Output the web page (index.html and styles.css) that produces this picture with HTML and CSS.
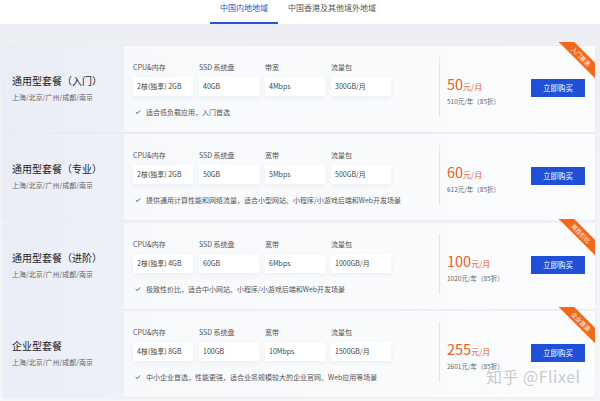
FILE: index.html
```html
<!DOCTYPE html>
<html lang="zh">
<head>
<meta charset="utf-8">
<link rel="stylesheet" href="styles.css">
</head>
<body>
<div class="tabs">
  <div class="tab active">中国内地地域</div>
  <div class="tab">中国香港及其他境外地域</div>
</div>
<div class="list">
  <div class="card">
    <div class="name">
      <div class="title">通用型套餐（入门）</div>
      <div class="cities">上海/北京/广州/成都/南京</div>
    </div>
    <div class="specs">
      <div class="labels"><span>CPU&amp;内存</span><span>SSD 系统盘</span><span>带宽</span><span>流量包</span></div>
      <div class="values"><span>2核(独享) 2GB</span><span>40GB</span><span>4Mbps</span><span>300GB/月</span></div>
      <div class="note"><svg class="tick" viewBox="0 0 8 8"><polyline points="1,4.2 3,6 7,2" /></svg>适合低负载应用，入门首选</div>
    </div>
    <div class="buy">
      <div class="price">
        <div class="month"><b>50</b>元/月</div>
        <div class="year">510元/年（85折）</div>
      </div>
      <div class="btn">立即购买</div>
    </div>
    <div class="ribbon"><span>入门首选</span></div>
  </div>

  <div class="card">
    <div class="name">
      <div class="title">通用型套餐（专业）</div>
      <div class="cities">上海/北京/广州/成都/南京</div>
    </div>
    <div class="specs">
      <div class="labels"><span>CPU&amp;内存</span><span>SSD 系统盘</span><span>宽带</span><span>流量包</span></div>
      <div class="values"><span>2核(独享) 2GB</span><span>50GB</span><span>5Mbps</span><span>500GB/月</span></div>
      <div class="note"><svg class="tick" viewBox="0 0 8 8"><polyline points="1,4.2 3,6 7,2" /></svg>提供通用计算性能和网络流量，适合小型网站、小程序/小游戏后端和Web开发场景</div>
    </div>
    <div class="buy">
      <div class="price">
        <div class="month"><b>60</b>元/月</div>
        <div class="year">612元/年（85折）</div>
      </div>
      <div class="btn">立即购买</div>
    </div>
  </div>

  <div class="card">
    <div class="name">
      <div class="title">通用型套餐（进阶）</div>
      <div class="cities">上海/北京/广州/成都/南京</div>
    </div>
    <div class="specs">
      <div class="labels"><span>CPU&amp;内存</span><span>SSD 系统盘</span><span>宽带</span><span>流量包</span></div>
      <div class="values"><span>2核(独享) 4GB</span><span>60GB</span><span>6Mbps</span><span>1000GB/月</span></div>
      <div class="note"><svg class="tick" viewBox="0 0 8 8"><polyline points="1,4.2 3,6 7,2" /></svg>极致性价比，适合中小网站、小程序/小游戏后端和Web开发场景</div>
    </div>
    <div class="buy">
      <div class="price">
        <div class="month"><b>100</b>元/月</div>
        <div class="year">1020元/年（85折）</div>
      </div>
      <div class="btn">立即购买</div>
    </div>
    <div class="ribbon"><span>高性价比</span></div>
  </div>

  <div class="card">
    <div class="name">
      <div class="title">企业型套餐</div>
      <div class="cities">上海/北京/广州/成都/南京</div>
    </div>
    <div class="specs">
      <div class="labels"><span>CPU&amp;内存</span><span>SSD 系统盘</span><span>宽带</span><span>流量包</span></div>
      <div class="values"><span>4核(独享) 8GB</span><span>100GB</span><span>10Mbps</span><span>1500GB/月</span></div>
      <div class="note"><svg class="tick" viewBox="0 0 8 8"><polyline points="1,4.2 3,6 7,2" /></svg>中小企业首选，性能更强，适合业务规模较大的企业官网、Web应用等场景</div>
    </div>
    <div class="buy">
      <div class="price">
        <div class="month"><b>255</b>元/月</div>
        <div class="year">2601元/年（85折）</div>
      </div>
      <div class="btn">立即购买</div>
    </div>
    <div class="ribbon"><span>企业首选</span></div>
  </div>
</div>
<div class="watermark">知乎 @Flixel</div>
</body>
</html>
```

FILE: styles.css
```css
html, body {
  margin: 0;
  padding: 0;
}
body {
  width: 600px;
  height: 401px;
  overflow: hidden;
  position: relative;
  font-family: "Noto Sans CJK SC", "Noto Sans", sans-serif;
  background: linear-gradient(#eceef3, #f3f4f7 60%, #f5f6f8);
  color: #333;
}
.tabs {
  height: 24px;
  background: #fff;
  display: flex;
  padding-left: 210px;
  box-sizing: border-box;
}
.tab {
  padding: 3px 10px 0;
  font-size: 8px;
  line-height: 10px;
  color: #555;
  height: 24px;
  box-sizing: border-box;
}
.tab.active {
  color: #2357d3;
  border-bottom: 2px solid #2357d3;
}
.list {
  padding: 22px 5px 0 3px;
  display: flex;
  flex-direction: column;
  gap: 2.3px;
}
.card {
  position: relative;
  height: 86px;
  display: grid;
  grid-template-columns: 121px 315px 1fr;
  background: linear-gradient(90deg, #f7f8fb, #fbfcfd);
  box-shadow: 0 1px 3px rgba(40, 60, 100, 0.05);
}
.name {
  background: linear-gradient(90deg, #eaedf6, #eef1f8);
  padding-left: 9px;
  display: flex;
  flex-direction: column;
  justify-content: center;
  gap: 5px;
  padding-bottom: 1px;
}
.title {
  font-size: 10px;
  line-height: 12px;
  color: #222;
}
.cities {
  font-size: 7px;
  line-height: 10px;
  color: #666;
}
.specs {
  padding: 16px 0 0 9px;
}
.labels, .values {
  display: grid;
  grid-template-columns: repeat(4, 60px);
  column-gap: 6px;
}
.labels span {
  font-size: 7px;
  line-height: 10px;
  color: #555;
}
.values {
  margin-top: 5px;
}
.values span {
  height: 19px;
  background: #fff;
  box-shadow: 0 2px 5px rgba(60, 80, 120, 0.07);
  font-size: 7px;
  line-height: 19px;
  padding-left: 4px;
  color: #444;
}
.note {
  margin-top: 11px;
  font-size: 7px;
  line-height: 10px;
  color: #555;
  display: flex;
  align-items: center;
  padding-left: 2px;
}
.tick {
  width: 6px;
  height: 6px;
  margin-right: 5px;
  fill: none;
  stroke: #3c4f7a;
  stroke-width: 1.3;
}
.buy {
  margin-top: 11px;
  height: 60px;
  border-left: 1px solid #e3e6ec;
  display: flex;
  align-items: flex-start;
  padding: 20px 10px 0 7px;
  box-sizing: border-box;
}
.price {
  flex: 1;
}
.month {
  color: #e8611f;
  font-size: 8px;
  line-height: 14px;
}
.month b {
  font-weight: normal;
  font-size: 14.5px;
}
.year {
  margin-top: 3px;
  font-size: 6.5px;
  line-height: 8px;
  color: #666;
}
.btn {
  margin-top: 2px;
  width: 54px;
  height: 18px;
  background: #1f50d6;
  color: #fff;
  font-size: 7.5px;
  line-height: 18px;
  text-align: center;
}
.ribbon {
  position: absolute;
  top: -4px;
  right: 0;
  width: 36px;
  height: 38px;
  overflow: hidden;
}
.ribbon span {
  position: absolute;
  left: -8px;
  top: 9px;
  width: 60px;
  height: 11px;
  background: #f2691a;
  color: #fff;
  font-size: 6px;
  line-height: 11px;
  text-align: center;
  transform: rotate(45deg);
}
.watermark {
  position: absolute;
  left: 486px;
  top: 367px;
  font-size: 16px;
  line-height: 18px;
  color: rgba(120, 120, 125, 0.4);
  letter-spacing: 0.5px;
}
```
